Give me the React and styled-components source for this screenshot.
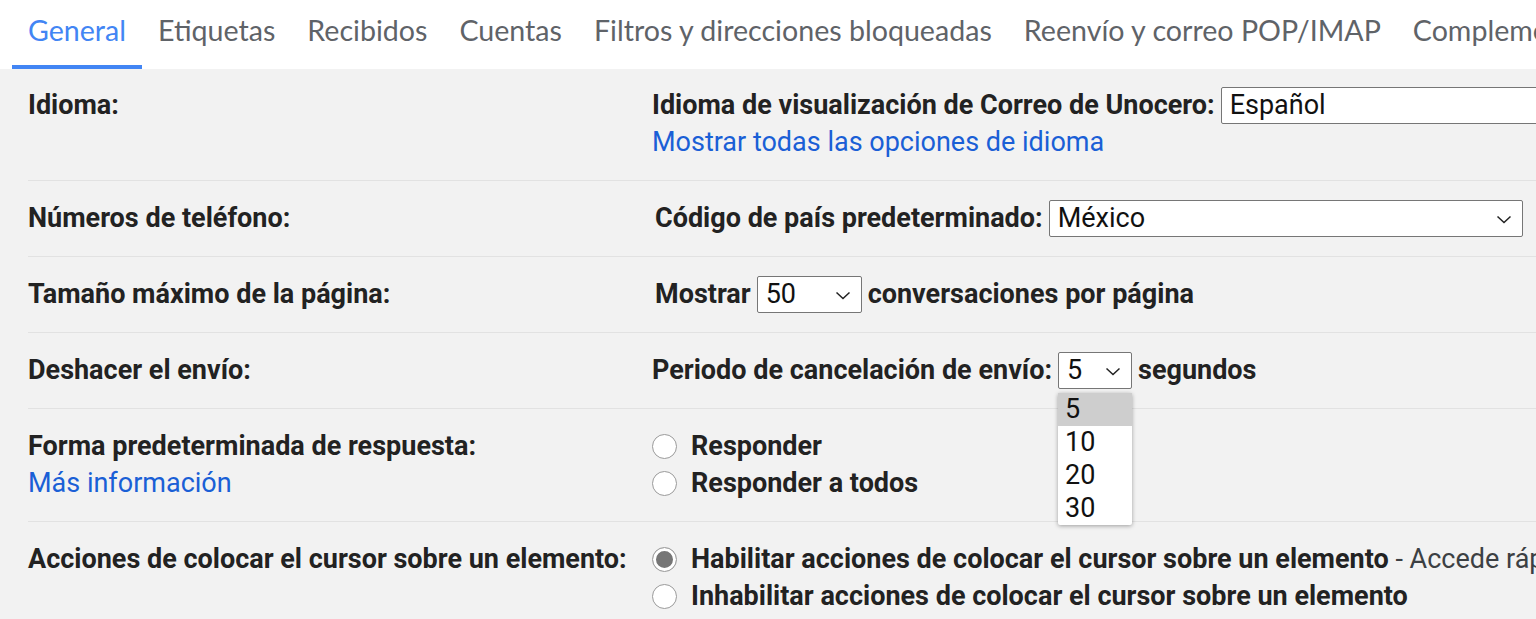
import React from 'react';
import styled, { createGlobalStyle } from 'styled-components';

const GlobalStyle = createGlobalStyle`
  html, body {
    margin: 0;
    padding: 0;
    background: #f2f2f2;
    overflow: hidden;
  }
  body {
    font-family: Roboto, "Liberation Sans", Arial, sans-serif;
    color: #202124;
  }
`;

const Page = styled.div`
  width: 1536px;
  height: 619px;
  overflow: hidden;
  background: #f2f2f2;
`;

const TabBar = styled.nav`
  display: flex;
  align-items: stretch;
  height: 69px;
  padding-left: 12px;
  background: #ffffff;
  white-space: nowrap;
  overflow: hidden;
`;

const Tab = styled.div`
  display: flex;
  align-items: center;
  padding: 0 16px 6px;
  font-family: Lato, "Open Sans", sans-serif;
  font-size: 28.6px;
  color: ${(p) => (p.$active ? '#4285f4' : '#5f6368')};
  border-bottom: 4px solid ${(p) => (p.$active ? '#4285f4' : 'transparent')};
`;

const Settings = styled.div`
  padding-left: 28px;
`;

const Row = styled.section`
  display: grid;
  grid-template-columns: 624px 1fr;
  padding: ${(p) => (p.$first ? '18px' : '19px')} 0 19px;
  border-top: ${(p) => (p.$first ? 'none' : '1px solid #e2e2e2')};
  font-size: 27px;
  line-height: 37px;
`;

const Label = styled.div`
  display: flex;
  flex-direction: column;
  font-weight: 700;
  color: #222;
`;

const Control = styled.div`
  display: flex;
  flex-direction: column;
  min-width: 0;
  white-space: nowrap;
`;

const Line = styled.div`
  display: flex;
  align-items: center;
  gap: 6px;
  font-weight: 700;
  color: #222;
  padding-left: ${(p) => p.$indent || 0}px;
`;

const Link = styled.a`
  color: #1a5fd6;
  font-weight: 400;
  text-decoration: none;
  cursor: pointer;
`;

const SelectBox = styled.div`
  position: relative;
  display: flex;
  align-items: center;
  justify-content: space-between;
  box-sizing: border-box;
  width: ${(p) => p.$width}px;
  height: 37px;
  padding: 0 10px 0 8px;
  flex-shrink: 0;
  background: #ffffff;
  border: 1px solid #767676;
  border-radius: 2px;
  font-weight: 400;
  color: #111;
`;

const Menu = styled.ul`
  position: absolute;
  top: 40px;
  left: -1px;
  z-index: 5;
  width: 74px;
  margin: 0;
  padding: 0;
  list-style: none;
  background: #ffffff;
  box-shadow: 0 1px 4px rgba(0, 0, 0, 0.35);
  border-radius: 2px;
`;

const Option = styled.li`
  height: 33px;
  line-height: 33px;
  padding-left: 7px;
  background: ${(p) => (p.$selected ? '#cecece' : 'transparent')};
  color: #111;
`;

const Radio = styled.span`
  display: inline-block;
  box-sizing: border-box;
  width: 25px;
  height: 25px;
  margin-right: 8px;
  border-radius: 50%;
  background: #ffffff;
  border: 1.5px solid #9a9a9a;
  box-shadow: ${(p) => (p.$checked ? 'inset 0 0 0 3px #fff, inset 0 0 0 12px #767676' : 'none')};
  flex-shrink: 0;
`;

const Note = styled.span`
  font-weight: 400;
  color: #3c4043;
`;

const Chevron = () => (
  <svg width="16" height="10" viewBox="0 0 16 10" fill="none">
    <path d="M1.5 2.5l6.5 6 6.5-6" stroke="#222" strokeWidth="1.5" />
  </svg>
);

const Select = ({ value, width, chevron = true, children }) => (
  <SelectBox $width={width}>
    <span>{value}</span>
    {chevron && <Chevron />}
    {children}
  </SelectBox>
);

const tabs = [
  'General',
  'Etiquetas',
  'Recibidos',
  'Cuentas',
  'Filtros y direcciones bloqueadas',
  'Reenvío y correo POP/IMAP',
  'Complementos',
];

export default function App() {
  return (
    <Page>
      <GlobalStyle />
      <TabBar>
        {tabs.map((t, i) => (
          <Tab key={t} $active={i === 0}>
            {t}
          </Tab>
        ))}
      </TabBar>
      <Settings>
        <Row $first>
          <Label>Idioma:</Label>
          <Control>
            <Line>
              Idioma de visualización de Correo de Unocero:
              <Select value="Español" width={360} chevron={false} />
            </Line>
            <Link>Mostrar todas las opciones de idioma</Link>
          </Control>
        </Row>
        <Row>
          <Label>Números de teléfono:</Label>
          <Control>
            <Line $indent={3}>
              Código de país predeterminado:
              <Select value="México" width={474} />
            </Line>
          </Control>
        </Row>
        <Row>
          <Label>Tamaño máximo de la página:</Label>
          <Control>
            <Line $indent={3}>
              Mostrar
              <Select value="50" width={105} />
              conversaciones por página
            </Line>
          </Control>
        </Row>
        <Row>
          <Label>Deshacer el envío:</Label>
          <Control>
            <Line>
              Periodo de cancelación de envío:
              <Select value="5" width={74}>
                <Menu>
                  {['5', '10', '20', '30'].map((o, i) => (
                    <Option key={o} $selected={i === 0}>
                      {o}
                    </Option>
                  ))}
                </Menu>
              </Select>
              segundos
            </Line>
          </Control>
        </Row>
        <Row>
          <Label>
            Forma predeterminada de respuesta:
            <Link>Más información</Link>
          </Label>
          <Control>
            <Line>
              <Radio />
              Responder
            </Line>
            <Line>
              <Radio />
              Responder a todos
            </Line>
          </Control>
        </Row>
        <Row>
          <Label>Acciones de colocar el cursor sobre un elemento:</Label>
          <Control>
            <Line>
              <Radio $checked />
              <span>
                Habilitar acciones de colocar el cursor sobre un elemento
                <Note> - Accede rápidamente a las opciones de archivar</Note>
              </span>
            </Line>
            <Line>
              <Radio />
              Inhabilitar acciones de colocar el cursor sobre un elemento
            </Line>
          </Control>
        </Row>
      </Settings>
    </Page>
  );
}
